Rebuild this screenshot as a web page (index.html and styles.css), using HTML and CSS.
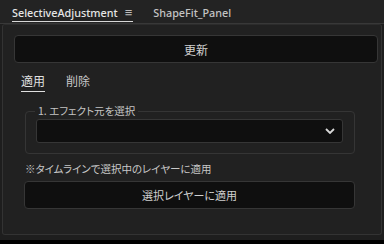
FILE: index.html
```html
<!DOCTYPE html>
<html lang="ja">
<head>
<meta charset="utf-8">
<link rel="stylesheet" href="styles.css">
</head>
<body>
<div class="app">
  <div class="tabbar">
    <div class="tab active"><span class="tab-label">SelectiveAdjustment</span><span class="menu">≡</span></div>
    <div class="tab"><span class="tab-label">ShapeFit_Panel</span></div>
  </div>
  <div class="panel">
    <button class="btn update">更新</button>
    <div class="subtabs">
      <div class="subtab on">適用</div>
      <div class="subtab">削除</div>
    </div>
    <fieldset class="group">
      <legend class="legend">1. エフェクト元を選択</legend>
      <div class="select">
        <svg class="chev" width="10" height="6" viewBox="0 0 10 6"><path d="M1 1 L5 5 L9 1" fill="none" stroke="#d8d8d8" stroke-width="1.8"/></svg>
      </div>
    </fieldset>
    <div class="note">※タイムラインで選択中のレイヤーに適用</div>
    <button class="btn apply">選択レイヤーに適用</button>
  </div>
  <div class="footer"></div>
</div>
</body>
</html>
```
FILE: styles.css
```css
html, body {
  margin: 0;
  padding: 0;
  background: #1e1e1e;
}
.app {
  width: 384px;
  height: 244px;
  display: flex;
  flex-direction: column;
  background: #1e1e1e;
  font-family: "Noto Sans CJK JP", "Noto Sans", sans-serif;
  font-feature-settings: "palt";
  color: #cfcfcf;
  overflow: hidden;
}
.tabbar {
  height: 24px;
  box-sizing: border-box;
  border-bottom: 1px solid #383838;
  display: flex;
  align-items: stretch;
  padding-left: 12px;
  gap: 21px;
  background: #232323;
}
.tab {
  display: flex;
  align-items: center;
  font-family: "Noto Sans", sans-serif;
  font-size: 10.8px;
  font-weight: 500;
  color: #c4c4c4;
  gap: 7px;
  box-sizing: border-box;
  padding-top: 1px;
}
.tab.active {
  color: #e6e6e6;
  position: relative;
}
.tab.active::after {
  content: "";
  position: absolute;
  left: 0;
  right: -1px;
  bottom: 1px;
  height: 1px;
  background: #d8d8d8;
}
.menu {
  font-size: 13px;
  color: #bdbdbd;
}
.panel {
  margin: 0 2px 0 2px;
  height: 211px;
  box-sizing: border-box;
  border: 1px solid #333333;
  border-top-color: #2c2c2c;
  border-radius: 3px;
  background: #212121;
  display: flex;
  flex-direction: column;
  align-items: flex-start;
}
.btn {
  font-family: "Noto Sans CJK JP", sans-serif;
  font-feature-settings: "palt";
  font-size: 12px;
  color: #d0d0d0;
  background: #0f0f0f;
  border: 1px solid #363636;
  border-radius: 4px;
  padding: 0;
  box-sizing: border-box;
}
.update {
  margin: 10px 0 0 11px;
  width: 364px;
  height: 28px;
}
.subtabs {
  display: flex;
  gap: 21px;
  margin: 10px 0 0 18px;
}
.subtab {
  font-size: 12px;
  line-height: 16px;
  padding: 0 0 2px;
  color: #c8c8c8;
  border-bottom: 1px solid transparent;
}
.subtab.on {
  color: #e0e0e0;
  border-bottom-color: #e0e0e0;
}
.group {
  margin: 12px 0 0 22px;
  width: 330px;
  box-sizing: border-box;
  border: 1px solid #353535;
  border-radius: 4px;
  padding: 1px 11px 10px 10px;
}
.legend {
  font-size: 10.5px;
  line-height: 14px;
  padding: 0 3px;
  margin-left: -1px;
  color: #c4c4c4;
}
.select {
  height: 24px;
  box-sizing: border-box;
  background: #0f0f0f;
  border: 1px solid #363636;
  border-radius: 3px;
  display: flex;
  align-items: center;
  justify-content: flex-end;
  padding-right: 7px;
}
.note {
  margin: 7px 0 0 22px;
  font-size: 10.5px;
  line-height: 16px;
  color: #c8c8c8;
}
.apply {
  margin: 4px 0 0 21px;
  width: 331px;
  height: 28px;
  font-size: 11px;
}
.footer {
  margin-top: 5px;
  height: 4px;
  background: #000;
}
```
